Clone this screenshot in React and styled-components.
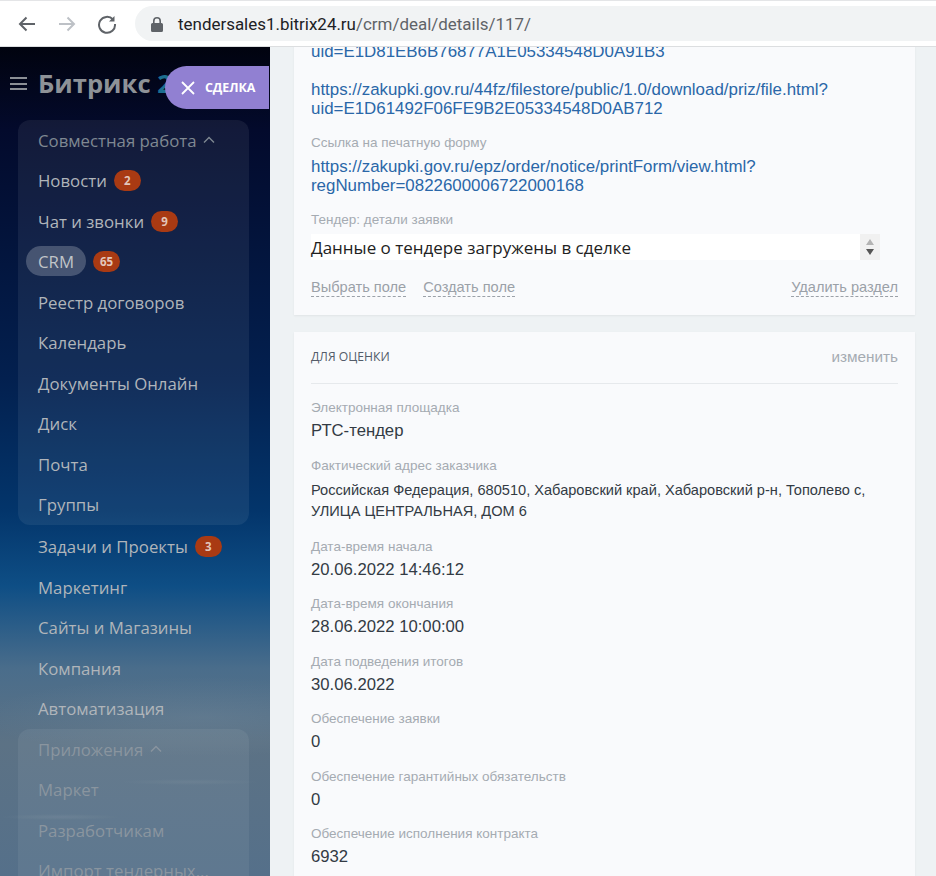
import React from "react";
import styled, { createGlobalStyle } from "styled-components";

const Global = createGlobalStyle`
  html, body { margin: 0; padding: 0; height: 100%; overflow: hidden; background: #eef2f4; }
  #root { width: 936px; height: 876px; overflow: hidden; }
  * { box-sizing: border-box; }
`;

const Page = styled.div`
  width: 936px; height: 876px; display: flex; flex-direction: column; overflow: hidden;
`;
const Chrome = styled.header`
  height: 47px; flex: none; display: flex; align-items: center; background: #fff;
  border-top: 1px solid #e4e5e7; border-bottom: 1px solid #dcdee0; padding-left: 17px;
`;
const NavIcon = styled.svg`
  width: 20px; height: 20px; flex: none; margin-right: 20px; color: ${p => p.$c || "#5f6368"};
`;
const Omnibox = styled.div`
  flex: 1; height: 35px; margin-left: -2px; margin-right: -30px; border-radius: 18px; background: #f1f3f4;
  display: flex; align-items: center; padding-left: 16px; font: 400 16.95px Roboto, "Liberation Sans", sans-serif;
  color: #5f6368;
`;
const Lock = styled.svg` width: 12px; height: 16px; margin-right: 15px; flex: none; `;
const Host = styled.span` color: #202124; `;

const Body = styled.div` flex: 1; display: flex; min-height: 0; `;
const Sidebar = styled.aside`
  width: 270px; flex: none; position: relative; overflow: hidden; padding: 0 21px 0 18px;
  font: 500 16.8px "Open Sans", sans-serif; color: #b0b5ba;
  background:
    radial-gradient(60px 3px at 60px 770px, rgba(190,200,210,.1), transparent),
    radial-gradient(70px 3px at 190px 735px, rgba(190,200,210,.08), transparent),
    radial-gradient(220px 40px at 200px 670px, rgba(170,185,195,.12), transparent),
    linear-gradient(180deg, #01030f 0, #030a2c 10%, #03204f 40%, #03356b 56%, #0e4e85 65%, #4a6d8b 75%, #5c7285 84%, #55708a 100%);
`;
const LogoRow = styled.div`
  height: 73.2px; display: flex; align-items: center; margin-left: -8px;
`;
const Burger = styled.span`
  width: 17px; height: 13px; flex: none; margin-right: 11px;
  border-top: 2px solid #8b8f95; border-bottom: 2px solid #8b8f95; position: relative;
  &::after { content: ""; position: absolute; left: 0; right: 0; top: 3.5px; height: 2px; background: #8b8f95; }
`;
const Logo = styled.span`
  font: 700 25.6px "Open Sans", sans-serif; color: #8e9297; white-space: nowrap;
  & b { color: #1d6f90; font-weight: 700; }
`;
const DealTab = styled.button`
  position: absolute; top: 19px; right: 1px; width: 104px; height: 43px; border: 0; padding: 0 0 0 15px;
  border-radius: 22px 0 0 22px; background: #9180d2; color: #fff; display: flex; align-items: center; gap: 9px;
  font: 700 12.5px "Open Sans", sans-serif; letter-spacing: -0.1px;
`;
const Group = styled.section`
  border-radius: 12px; background: ${p => p.$faded ? "rgba(255,255,255,.06)" : "rgba(255,255,255,.065)"};
  color: ${p => p.$faded ? "#8a959f" : "inherit"};
  margin-bottom: 1.5px;
`;
const Item = styled.div`
  height: 40.5px; display: flex; align-items: center; padding-left: 20px; white-space: nowrap;
  color: ${p => p.$muted ? "#7f8892" : "inherit"};
`;
const Label = styled.span`
  position: relative;
  ${p => p.$active ? `
    &::before { content: ""; position: absolute; left: -12px; right: -12px; top: -4px; bottom: -3px;
      background: rgba(255,255,255,.22); border-radius: 15px; }
  ` : ""}
`;
const Badge = styled.span`
  min-width: 27px; height: 21px; margin-left: ${p => p.$wide ? 19 : 7}px; padding: 0 6px; border-radius: 11px; background: #a93a13;
  color: #e3c6bb; font: 700 11.5px/21px "Open Sans", sans-serif; text-align: center;
`;
const Chevron = styled.svg` width: 12px; height: 8px; margin-left: 7px; flex: none; `;

const Main = styled.main`
  flex: 1; min-width: 0; padding: 0 21px 0 24px; overflow: hidden;
  font-family: "Liberation Sans", sans-serif; background: #eef2f4;
`;
const Card = styled.section`
  background: #f9fafc; padding: 0 17px; box-shadow: 0 1px 2px rgba(0,0,0,.06);
  margin-bottom: 17px;
`;
const Clip = styled(Card)`
  margin-top: -5px; height: 273px; padding-top: 0;
`;
const LinkText = styled.a`
  display: block; color: #2a67a8; font-size: 16.9px; line-height: 19px; white-space: nowrap;
  & + & { margin-top: 19px; }
`;
const FieldLabel = styled.div`
  color: #a5abb2; font-size: 13.5px; line-height: 16px; white-space: nowrap;
`;
const Pair = styled.div` margin-top: 17px; `;
const PairLink = styled.div` margin-top: 6px; `;
const SelectBox = styled.div`
  width: 569px; height: 26px; margin-top: 6px; background: #fff; display: flex; align-items: center;
  justify-content: space-between; font: 400 17px "Open Sans", sans-serif; color: #222;
`;
const Spin = styled.span`
  width: 20px; height: 26px; background: #f1f1f1; display: flex; flex-direction: column; align-items: center;
  justify-content: center; gap: 4px;
`;
const Tri = styled.i`
  width: 0; height: 0; border-left: 4.5px solid transparent; border-right: 4.5px solid transparent;
  ${p => p.$up ? "border-bottom: 6px solid #b3b3b3;" : "border-top: 6px solid #555;"}
`;
const Actions = styled.div`
  display: flex; gap: 17px; margin-top: 18px; color: #9ba1a8; font-size: 14.6px; line-height: 18px;
`;
const Dash = styled.span`
  border-bottom: 1px dashed #9ba1a8;
  &:last-child { margin-left: auto; }
`;
const CardHead = styled.div`
  height: 52px; border-bottom: 1px solid #e6e9ec; display: flex; justify-content: space-between; align-items: center;
  padding-bottom: 2px;
`;
const Title = styled.h3`
  margin: 0; font: 500 12.2px "Open Sans", sans-serif; color: #535c69;
`;
const Edit = styled.span` color: #a5abb2; font-size: 15.3px; `;
const Field = styled.div`
  height: ${p => p.$h || 57.5}px; padding-top: ${p => p.$top || 0}px;
`;
const Value = styled.div`
  margin-top: 5.3px; font-size: 16.7px; line-height: 20px; color: #333b44;
`;
const Address = styled.div`
  margin-top: 6px; font-size: 14.6px; line-height: 21px; color: #333b44;
`;

const nav1 = [["Новости", "2"], ["Чат и звонки", "9"], ["CRM", "65", true], ["Реестр договоров"], ["Календарь"], ["Документы Онлайн"], ["Диск"], ["Почта"], ["Группы"]];
const nav2 = [["Задачи и Проекты", "3"], ["Маркетинг"], ["Сайты и Магазины"], ["Компания"], ["Автоматизация"]];
const nav3 = ["Маркет", "Разработчикам", "Импорт тендерных..."];
const fields = [
  ["Дата-время начала", "20.06.2022 14:46:12"],
  ["Дата-время окончания", "28.06.2022 10:00:00"],
  ["Дата подведения итогов", "30.06.2022"],
  ["Обеспечение заявки", "0"],
  ["Обеспечение гарантийных обязательств", "0"],
  ["Обеспечение исполнения контракта", "6932"],
];

const Up = ({ c }) => (
  <Chevron viewBox="0 0 12 8" fill="none" stroke={c} strokeWidth="1.4"><path d="M1 6.5 6 1.5l5 5" /></Chevron>
);

export default function App() {
  return (
    <Page>
      <Global />
      <Chrome>
        <NavIcon viewBox="0 0 20 20" fill="none" stroke="currentColor" strokeWidth="2"><path d="M18 10H3M9.5 3.5 3 10l6.500 6.500" /></NavIcon>
        <NavIcon $c="#bdc1c6" viewBox="0 0 20 20" fill="none" stroke="currentColor" strokeWidth="2"><path d="M2 10h15M10.500 3.500 17 10l-6.500 6.500" /></NavIcon>
        <NavIcon viewBox="0 0 20 20" fill="none" stroke="currentColor" strokeWidth="2"><path d="M16 5.500A8 8 0 1 0 18 10" /><path d="M17.500 2v5.500H12z" fill="currentColor" stroke="none" /></NavIcon>
        <Omnibox>
          <Lock viewBox="0 0 12 16"><path d="M2 7V5a4 4 0 0 1 8 0v2h.5A1.500 1.500 0 0 1 12 8.500v6a1.500 1.500 0 0 1-1.500 1.500h-9A1.500 1.500 0 0 1 0 14.500v-6A1.500 1.500 0 0 1 1.500 7zm1.600 0h4.800V5a2.400 2.400 0 0 0-4.800 0z" fill="#5f6368" /></Lock>
          <span><Host>tendersales1.bitrix24.ru</Host>/crm/deal/details/117/</span>
        </Omnibox>
      </Chrome>
      <Body>
        <Sidebar>
          <LogoRow>
            <Burger />
            <Logo>Битрикс <b>24</b></Logo>
          </LogoRow>
          <DealTab>
            <svg width="16" height="16" viewBox="0 0 16 16" stroke="#fff" strokeWidth="1.800" fill="none"><path d="M2 2l12 12M14 2 2 14" /></svg>
            СДЕЛКА
          </DealTab>
          <Group>
            <Item $muted>Совместная работа<Up c="#7f8892" /></Item>
            {nav1.map(([t, b, a]) => (
              <Item key={t}><Label $active={a}>{t}</Label>{b && <Badge $wide={a}>{b}</Badge>}</Item>
            ))}
          </Group>
          {nav2.map(([t, b]) => (
            <Item key={t}>{t}{b && <Badge>{b}</Badge>}</Item>
          ))}
          <Group $faded>
            <Item>Приложения<Up c="#8a959f" /></Item>
            {nav3.map(t => <Item key={t}>{t}</Item>)}
          </Group>
        </Sidebar>
        <Main>
          <Clip>
            <LinkText>uid=E1D81EB6B76877A1E05334548D0A91B3</LinkText>
            <LinkText>https://zakupki.gov.ru/44fz/filestore/public/1.0/download/priz/file.html?<br />uid=E1D61492F06FE9B2E05334548D0AB712</LinkText>
            <Pair>
              <FieldLabel>Ссылка на печатную форму</FieldLabel>
              <PairLink><LinkText>https://zakupki.gov.ru/epz/order/notice/printForm/view.html?<br />regNumber=0822600006722000168</LinkText></PairLink>
            </Pair>
            <Pair>
              <FieldLabel>Тендер: детали заявки</FieldLabel>
              <SelectBox>Данные о тендере загружены в сделке<Spin><Tri $up /><Tri /></Spin></SelectBox>
            </Pair>
            <Actions><Dash>Выбрать поле</Dash><Dash>Создать поле</Dash><Dash>Удалить раздел</Dash></Actions>
          </Clip>
          <Card>
            <CardHead><Title>ДЛЯ ОЦЕНКИ</Title><Edit>изменить</Edit></CardHead>
            <Field $top={16} $h={74}><FieldLabel>Электронная площадка</FieldLabel><Value>РТС-тендер</Value></Field>
            <Field $h={80.5}><FieldLabel>Фактический адрес заказчика</FieldLabel><Address>Российская Федерация, 680510, Хабаровский край, Хабаровский р-н, Тополево с,<br />УЛИЦА ЦЕНТРАЛЬНАЯ, ДОМ 6</Address></Field>
            {fields.map(([l, v]) => (
              <Field key={l}><FieldLabel>{l}</FieldLabel><Value>{v}</Value></Field>
            ))}
          </Card>
        </Main>
      </Body>
    </Page>
  );
}
